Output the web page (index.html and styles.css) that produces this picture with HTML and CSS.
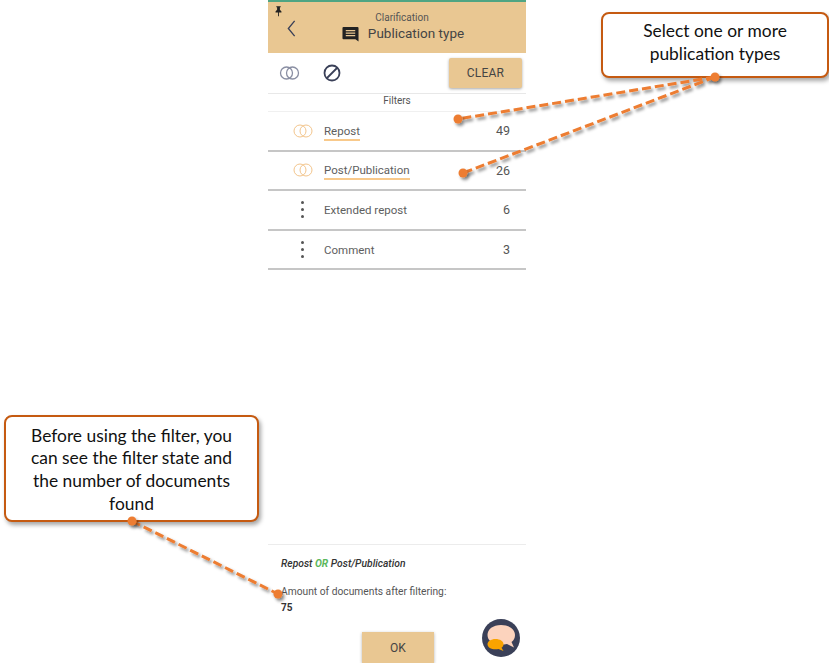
FILE: index.html
```html
<!DOCTYPE html>
<html lang="en">
<head>
  <meta charset="UTF-8" />
  <meta name="viewport" content="width=device-width, initial-scale=1" />
  <title>Publication type filter</title>
  <link rel="stylesheet" href="styles.css">
</head>
<body>

  <div class="phone">
    <div class="header">
      <svg class="pin" viewBox="0 0 8 12"><path d="M1.500 0h5v1H5.600v3L7.400 6v1H4.500v4.500h-1V7H.6V6l1.800-2V1h-.9z" fill="#222"/></svg>
      <svg class="back" viewBox="0 0 10 20"><path d="M8.500 1.500L1.500 10l7 8.500" fill="none" stroke="#3a4058" stroke-width="1.500"/></svg>
      <div class="header-titles">
        <div class="header-small">Clarification</div>
        <div class="header-main">
          <svg class="chat-icon" viewBox="0 0 18 18"><path d="M1.500 1h15c.6 0 1 .4 1 1v14.500L14.200 14H1.500c-.6 0-1-.4-1-1V2c0-.6.4-1 1-1z" fill="#222"/><path d="M4 4.200h10v1.300H4zM4 6.900h10v1.300H4zM4 9.600h10v1.300H4z" fill="#e9c792"/></svg>
          <span>Publication type</span>
        </div>
      </div>
    </div>

    <div class="toolbar">
      <svg class="rings" viewBox="0 0 20 14"><circle cx="7" cy="7" r="6" fill="none" stroke="#8a8fa3" stroke-width="1.300"/><circle cx="13" cy="7" r="6" fill="none" stroke="#8a8fa3" stroke-width="1.300"/></svg>
      <svg class="ban" viewBox="0 0 18 18"><circle cx="9" cy="9" r="7.500" fill="none" stroke="#3a4058" stroke-width="1.800"/><path d="M4 14L14 4" stroke="#3a4058" stroke-width="1.800"/></svg>
      <button class="clear-button">CLEAR</button>
    </div>

    <div class="filters-label">Filters</div>

    <div class="row">
      <svg class="rings rings-on" viewBox="0 0 20 14"><circle cx="7" cy="7" r="6" fill="none" stroke="#f3c58c" stroke-width="1"/><circle cx="13" cy="7" r="6" fill="none" stroke="#f3c58c" stroke-width="1"/></svg>
      <span class="row-name selected">Repost</span>
      <span class="row-count">49</span>
    </div>
    <div class="row">
      <svg class="rings rings-on" viewBox="0 0 20 14"><circle cx="7" cy="7" r="6" fill="none" stroke="#f3c58c" stroke-width="1"/><circle cx="13" cy="7" r="6" fill="none" stroke="#f3c58c" stroke-width="1"/></svg>
      <span class="row-name selected">Post/Publication</span>
      <span class="row-count">26</span>
    </div>
    <div class="row">
      <div class="dots"><i></i><i></i><i></i></div>
      <span class="row-name">Extended repost</span>
      <span class="row-count">6</span>
    </div>
    <div class="row">
      <div class="dots"><i></i><i></i><i></i></div>
      <span class="row-name">Comment</span>
      <span class="row-count">3</span>
    </div>

    <div class="summary">
      <div class="summary-query">Repost <b>OR</b> Post/Publication</div>
      <div class="summary-label">Amount of documents after filtering:</div>
      <div class="summary-total">75</div>
    </div>

    <div class="footer">
      <button class="ok-button">OK</button>
      <svg class="chat-badge" viewBox="0 0 38 38">
        <circle cx="19" cy="19" r="19" fill="#3a4058"/>
        <path d="M19 6c8 0 14 4 14 10 0 3-1.200 5.400-3.500 7l2.500 5.500-7-3.500c-2 .5-4 .7-6 .7-8 0-13.500-4-13.500-9.700S11 6 19 6z" fill="#fcd3bd"/>
        <path d="M13.500 20c4.500 0 8 2.200 8 5.200 0 1.400-.7 2.600-2 3.500l2 3.300-5-2c-1 .2-2 .3-3 .3-4.500 0-8-2.200-8-5.100S9 20 13.500 20z" fill="#f9a300"/>
      </svg>
    </div>
  </div>

  <!-- annotations lying over the app -->
  <div class="callout callout-top">Select one or more publication types</div>
  <div class="callout callout-left">Before using the filter, you can see the filter state and the number of documents found</div>

  <svg class="leaders" viewBox="0 0 829 663">
    <defs>
      <filter id="soft" x="-10%" y="-30%" width="120%" height="160%">
        <feDropShadow dx="2" dy="2.500" stdDeviation="1.500" flood-color="#000" flood-opacity="0.45"/>
      </filter>
    </defs>
    <g filter="url(#soft)" stroke="#ed7d31" stroke-width="3" stroke-dasharray="9 4" fill="none">
      <path d="M715 77L458 119"/>
      <path d="M715 77L463 173"/>
      <path d="M132 521L278 594"/>
    </g>
    <g filter="url(#soft)" fill="#ed7d31">
      <circle cx="715" cy="77" r="4.500"/>
      <circle cx="458" cy="119" r="4.500"/>
      <circle cx="463" cy="173" r="4.500"/>
      <circle cx="132" cy="521" r="4.500"/>
      <circle cx="278" cy="594" r="4.500"/>
    </g>
  </svg>

</body>
</html>
```

FILE: styles.css
```css
body {
  font-family: Roboto, sans-serif;
  background: #fff;
  margin: 0;
  padding: 0;
  width: 829px;
  height: 663px;
  position: relative;
  overflow: hidden;
}

.phone {
  width: 258px;
  height: 663px;
  margin-left: 268px;
  display: flex;
  flex-direction: column;
  color: #555;
}

.header {
  height: 51px;
  background: #e9c792;
  border-top: 2px solid #4fa583;
  position: relative;
  display: flex;
  justify-content: center;
  flex-shrink: 0;
}

.pin {
  position: absolute;
  left: 7px;
  top: 4px;
  width: 7px;
  height: 11px;
}

.back {
  position: absolute;
  left: 19px;
  top: 17px;
  width: 9px;
  height: 19px;
}

.header-titles {
  text-align: center;
  padding-top: 9px;
  margin-left: 10px;
}

.header-small {
  font-size: 10px;
  line-height: 13px;
  color: #555;
}

.header-main {
  display: flex;
  align-items: center;
  gap: 9px;
  font-size: 13.500px;
  line-height: 20px;
  color: #444;
  margin-left: 2px;
  margin-top: -1px;
}

.chat-icon {
  width: 17px;
  height: 17px;
  margin-top: 2px;
}

.toolbar {
  height: 41px;
  display: flex;
  align-items: center;
  padding: 0 4px 0 11px;
  flex-shrink: 0;
  border-bottom: 1px solid #e8e8e8;
  box-sizing: border-box;
}

.rings {
  width: 21px;
  height: 14px;
  flex-shrink: 0;
}

.ban {
  width: 18px;
  height: 18px;
  margin-left: 23px;
}

.clear-button {
  margin-left: auto;
  width: 73px;
  height: 30px;
  background: #e9c792;
  border: none;
  border-radius: 2px;
  box-shadow: 0 1px 3px rgba(0, 0, 0, 0.35);
  font-family: Roboto, sans-serif;
  font-size: 12px;
  color: #444;
  letter-spacing: 0.2px;
}

.filters-label {
  height: 18px;
  line-height: 13px;
  font-size: 10px;
  text-align: center;
  color: #555;
  border-bottom: 1px solid #f0f0f0;
  box-sizing: border-box;
  flex-shrink: 0;
}

.row {
  height: 39.500px;
  display: flex;
  align-items: center;
  padding: 0 16px 0 25px;
  border-bottom: 2px solid #c6c6c6;
  box-sizing: border-box;
  flex-shrink: 0;
}

.rings-on {
  width: 20px;
}

.row-name {
  margin-left: 11px;
  margin-top: 2px;
  font-size: 11.500px;
  line-height: 15px;
  color: #5e5e5e;
}

.row-name.selected {
  border-bottom: 2px solid #f8c98b;
  margin-top: 3px;
}

.row-count {
  margin-left: auto;
  font-size: 12.500px;
  color: #555;
}

.dots {
  width: 19px;
  margin-right: 1px;
  display: flex;
  flex-direction: column;
  align-items: center;
  gap: 4px;
  flex-shrink: 0;
}

.dots i {
  width: 3px;
  height: 3px;
  border-radius: 50%;
  background: #555;
}

.summary {
  margin-top: auto;
  border-top: 1px solid #ececec;
  padding: 12px 13px 0;
  flex-shrink: 0;
}

.summary-query {
  font-size: 10.300px;
  line-height: 13px;
  font-weight: 500;
  font-style: italic;
  color: #333;
}

.summary-query b {
  color: #5cb85c;
  font-weight: 700;
}

.summary-label {
  font-size: 10.250px;
  line-height: 13px;
  margin-top: 15px;
  color: #555;
}

.summary-total {
  font-size: 10px;
  line-height: 13px;
  margin-top: 3px;
  font-weight: 700;
  color: #333;
}

.footer {
  height: 49px;
  position: relative;
  display: flex;
  justify-content: center;
  align-items: flex-end;
  flex-shrink: 0;
}

.ok-button {
  width: 72px;
  height: 31px;
  margin-left: 2px;
  background: #e9c792;
  border: none;
  box-shadow: 0 1px 3px rgba(0, 0, 0, 0.3);
  font-family: Roboto, sans-serif;
  font-size: 12px;
  color: #444;
}

.chat-badge {
  position: absolute;
  right: 6px;
  top: 5px;
  width: 38px;
  height: 38px;
}

.leaders {
  position: absolute;
  left: 0;
  top: 0;
  width: 829px;
  height: 663px;
  pointer-events: none;
}

.callout {
  position: absolute;
  box-sizing: border-box;
  background: #fff;
  border: 2px solid #c55a11;
  border-radius: 8px;
  box-shadow: 2px 3px 4px rgba(0, 0, 0, 0.35);
  font-family: Lato, sans-serif;
  font-size: 17.400px;
  line-height: 22.700px;
  color: #111;
  text-align: center;
  display: flex;
  align-items: center;
  justify-content: center;
}

.callout-top {
  left: 601px;
  top: 12px;
  width: 228px;
  height: 66px;
  padding: 0 30px 5px;
}

.callout-left {
  left: 4px;
  top: 415px;
  width: 255px;
  height: 107px;
  padding: 3px 20px 0;
}
```
